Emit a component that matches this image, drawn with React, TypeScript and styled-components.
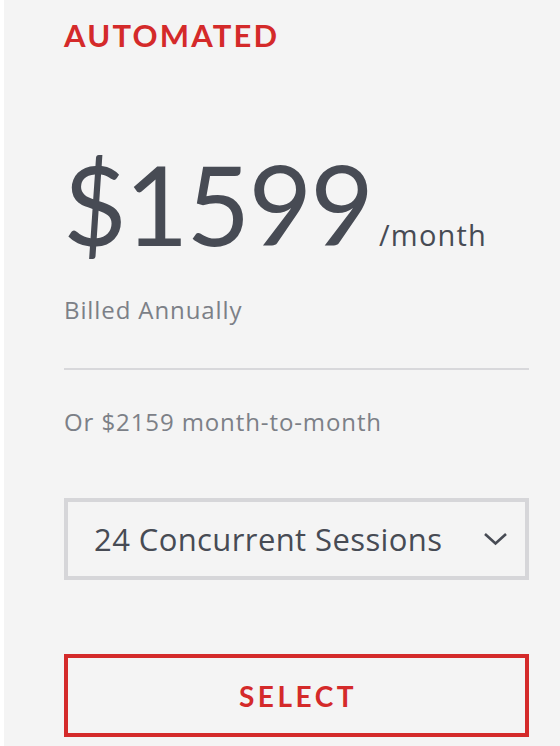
import React from "react";
import styled, { createGlobalStyle } from "styled-components";

const GlobalStyle = createGlobalStyle`
  body {
    margin: 0;
    background: #ffffff;
    font-family: "Open Sans", Lato, sans-serif;
  }
`;

export default function App() {
  return (
    <>
      <GlobalStyle />
      <Card>
        <Plan>AUTOMATED</Plan>
        <PriceRow>
          <Amount>$1599</Amount>
          <Period>/month</Period>
        </PriceRow>
        <Note $gap={36}>Billed Annually</Note>
        <Divider />
        <Note $gap={36}>Or $2159 month-to-month</Note>
        <Dropdown>
          <span>24 Concurrent Sessions</span>
          <svg width="25" height="14" viewBox="0 0 25 14">
            <path d="M2 2 L12.5 11.5 L23 2" fill="none" stroke="#474b54" strokeWidth="2.6" />
          </svg>
        </Dropdown>
        <SelectButton>SELECT</SelectButton>
      </Card>
    </>
  );
}

const Card = styled.div`
  margin-left: 4px;
  min-height: 746px;
  box-sizing: border-box;
  background: #f4f4f4;
  padding: 18px 31px 0 60px;
  display: flex;
  flex-direction: column;
`;

const Plan = styled.div`
  color: #d42a2a;
  font-family: Lato, sans-serif;
  font-size: 31px;
  font-weight: 700;
  letter-spacing: 2.2px;
  line-height: 34px;
`;

const PriceRow = styled.div`
  display: flex;
  align-items: baseline;
  margin-top: 96px;
  color: #474b54;
`;

const Amount = styled.span`
  font-family: Lato, sans-serif;
  font-size: 110px;
  line-height: 110px;
  font-weight: 400;
  letter-spacing: -2px;
  margin-left: -1px;
`;

const Period = styled.span`
  font-size: 29px;
  letter-spacing: 1.2px;
  margin-left: 7px;
`;

const Note = styled.div<{ $gap: number }>`
  color: #7c8087;
  font-size: 24px;
  letter-spacing: 0.9px;
  line-height: 32px;
  margin-top: ${(p) => p.$gap}px;
`;

const Divider = styled.hr`
  border: 0;
  height: 2px;
  background: #d8d8db;
  margin: 42px 0 0;
`;

const Dropdown = styled.div`
  margin-top: 60px;
  height: 82px;
  box-sizing: border-box;
  border: 4px solid #d6d6d9;
  display: flex;
  align-items: center;
  justify-content: space-between;
  padding: 0 17px 0 26px;
  color: #474b54;
  font-size: 31px;
  letter-spacing: 0.4px;
`;

const SelectButton = styled.button`
  margin-top: 74px;
  height: 83px;
  box-sizing: border-box;
  border: 4px solid #d42a2a;
  background: transparent;
  color: #d42a2a;
  font-family: Lato, sans-serif;
  font-size: 28px;
  font-weight: 700;
  letter-spacing: 3.5px;
  padding: 0 0 0 3px;
`;
